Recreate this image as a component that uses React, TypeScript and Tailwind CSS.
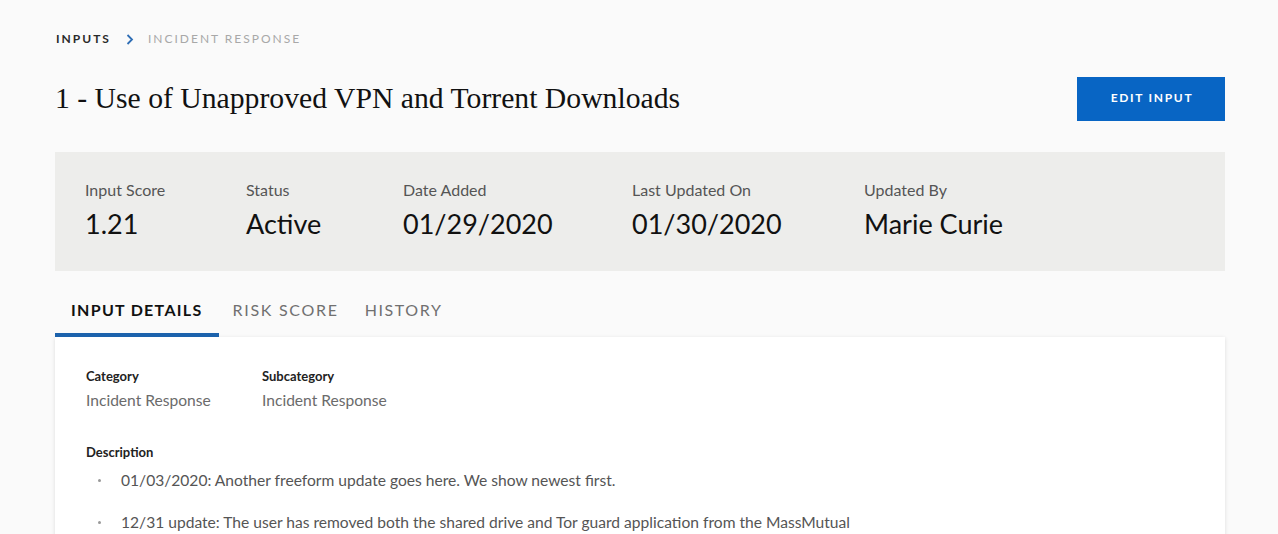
import React from "react";

export default function App() {
  const stats: [string, string, string][] = [
    ["Input Score", "1.21", "w-[161px]"],
    ["Status", "Active", "w-[157px]"],
    ["Date Added", "01/29/2020", "w-[229px]"],
    ["Last Updated On", "01/30/2020", "w-[232px]"],
    ["Updated By", "Marie Curie", ""],
  ];
  return (
    <div className="min-h-[534px] w-full bg-[#fafafa] font-['Lato',sans-serif] text-[#111]">
      <div className="pl-[55px] pr-[53px] pt-[31px]">
        {/* Breadcrumb */}
        <div className="flex items-center pl-px text-[12px] leading-[16px] tracking-[2px]">
          <span className="font-bold text-[#2a2a2a]">INPUTS</span>
          <svg className="ml-[15px] mr-[14px]" width="8" height="12" viewBox="0 0 8 12">
            <path d="M1.5 2 L6 6.5 L1.5 11" fill="none" stroke="#2f6eb5" strokeWidth="1.8" />
          </svg>
          <span className="text-[#a8a8a8]">INCIDENT RESPONSE</span>
        </div>

        {/* Title row */}
        <div className="mt-[30px] flex items-start justify-between">
          <h1 className="mt-[3px] font-['Liberation_Serif',serif] text-[29.7px] leading-[36px] text-[#111]">
            1 - Use of Unapproved VPN and Torrent Downloads
          </h1>
          <button className="h-[44px] w-[148px] bg-[#0865c4] pb-[3px] pl-[2px] text-[12px] font-bold tracking-[1.7px] text-white">
            EDIT INPUT
          </button>
        </div>

        {/* Stats panel */}
        <div className="mt-[31px] flex h-[119px] bg-[#ededeb] px-[30px] pt-[28px]">
          {stats.map(([l, v, w]) => (
            <div key={l} className={"flex flex-col " + w}>
              <span className="text-[16px] leading-[20px] text-[#555]">{l}</span>
              <span className="mt-[7px] text-[27px] leading-[34px] text-[#111]">{v}</span>
            </div>
          ))}
        </div>

        {/* Tabs */}
        <div className="mt-[29px] flex">
          <div className="flex flex-col">
            <span className="px-4 pb-[13px] text-[16px] font-bold leading-[20px] tracking-[1.3px] text-[#111]">
              INPUT DETAILS
            </span>
            <div className="h-[4px] bg-[#1c62ac]" />
          </div>
          <span className="pl-[14px] pr-[12px] text-[16px] leading-[20px] tracking-[1.7px] text-[#707070]">RISK SCORE</span>
          <span className="px-[14px] text-[16px] leading-[20px] tracking-[1.6px] text-[#707070]">HISTORY</span>
        </div>

        {/* Card */}
        <div className="h-[260px] bg-white px-[31px] pt-[30px] shadow-[0_1px_4px_rgba(0,0,0,0.12)]">
          <div className="flex">
            <div className="flex w-[176px] flex-col">
              <span className="text-[13px] font-bold leading-[18px] text-[#222]">Category</span>
              <span className="mt-[5px] text-[15.6px] leading-[20px] text-[#6b6b6b]">Incident Response</span>
            </div>
            <div className="flex flex-col">
              <span className="text-[13px] font-bold leading-[18px] text-[#222]">Subcategory</span>
              <span className="mt-[5px] text-[15.6px] leading-[20px] text-[#6b6b6b]">Incident Response</span>
            </div>
          </div>
          <div className="mt-[33px] text-[13px] font-bold leading-[18px] text-[#222]">Description</div>
          <ul className="mt-[9px] flex flex-col gap-[22px] text-[15.6px] leading-[20px] text-[#555]">
            <li className="flex items-center">
              <span className="ml-[12px] mr-[20px] h-[3px] w-[3px] rounded-full bg-[#999]" />
              <span>01/03/2020: Another freeform update goes here. We show newest first.</span>
            </li>
            <li className="flex items-center">
              <span className="ml-[12px] mr-[20px] h-[3px] w-[3px] rounded-full bg-[#999]" />
              <span>12/31 update: The user has removed both the shared drive and Tor guard application from the MassMutual</span>
            </li>
          </ul>
        </div>
      </div>
    </div>
  );
}
